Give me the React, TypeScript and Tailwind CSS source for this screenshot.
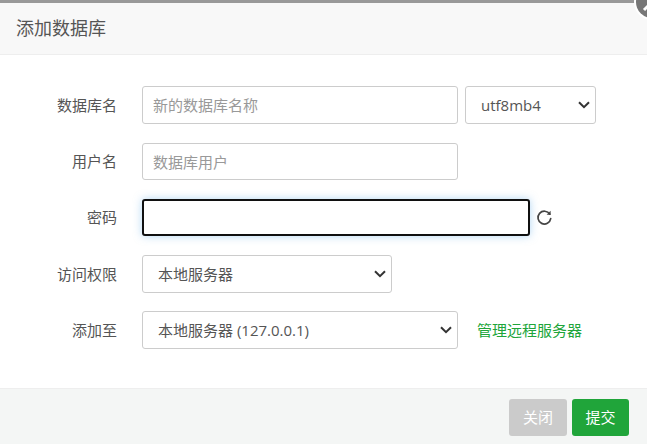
import React from "react";

function Row({ label, children, className }: { label: string; children: React.ReactNode; className: string }) {
  return (
    <div className={`flex items-center ${className}`}>
      <label className="w-[117px] shrink-0 text-right text-[15px] text-[#555]">{label}</label>
      <div className="ml-[25px] flex items-center">{children}</div>
    </div>
  );
}

function Select({ className, options }: { className: string; options: string[] }) {
  return (
    <div className={`relative h-[38px] ${className}`}>
      <select
        className="h-full w-full appearance-none rounded-[3px] border border-[#ccc] bg-white pl-[15px] pr-[24px] text-[15px] text-[#555] outline-none"
        defaultValue={options[0]}
      >
        {options.map((o) => (
          <option key={o}>{o}</option>
        ))}
      </select>
      <svg
        className="pointer-events-none absolute right-[6px] top-[15px]"
        width="12"
        height="8"
        viewBox="0 0 12 8"
        fill="none"
        stroke="#333"
        strokeWidth="2"
      >
        <path d="M1 1.2 6 6.2 11 1.2" />
      </svg>
    </div>
  );
}

const inputCls =
  "w-[316px] rounded-[3px] border border-[#ccc] bg-white px-[10px] text-[15px] text-[#555] placeholder:text-[#999] outline-none";

export default function App() {
  return (
    <div className="relative flex h-[444px] w-[647px] flex-col overflow-hidden bg-white font-['Open_Sans','Noto_Sans_CJK_SC',sans-serif]">
      <div className="h-[3px] shrink-0 bg-[#999]" />
      <div className="flex h-[52px] shrink-0 items-center border-b border-[#eee] bg-[#f8f8f8] pl-[16px] text-[18px] text-[#555]">
        添加数据库
      </div>
      <div className="flex-1 pt-[31px]">
        <Row label="数据库名" className="">
          <input className={`${inputCls} h-[38px]`} placeholder="新的数据库名称" readOnly />
          <Select className="ml-[7px] w-[131px]" options={["utf8mb4", "utf8", "gbk"]} />
        </Row>
        <Row label="用户名" className="mt-[19px]">
          <input className={`${inputCls} h-[37px]`} placeholder="数据库用户" readOnly />
        </Row>
        <Row label="密码" className="mt-[19px]">
          <input
            className="h-[37px] w-[388px] rounded-[3px] border-2 border-[#101010] bg-white px-[10px] text-[15px] shadow-[0_0_8px_rgba(102,175,233,0.5)] outline-none"
            readOnly
          />
          <svg className="ml-[6px]" width="17" height="17" viewBox="0 0 17 17" fill="none" stroke="#444" strokeWidth="1.7" strokeLinecap="round">
            <path d="M13.8 5.2A6.4 6.4 0 1 0 14.7 9.6" />
            <path d="M14.6 1.8V5.8H10.6" fill="#444" stroke="none" />
          </svg>
        </Row>
        <Row label="访问权限" className="mt-[19px]">
          <Select className="w-[250px]" options={["本地服务器", "所有人", "指定IP"]} />
        </Row>
        <Row label="添加至" className="mt-[18px]">
          <Select className="w-[316px]" options={["本地服务器 (127.0.0.1)"]} />
          <a className="ml-[19px] text-[15px] text-[#20a53a]">管理远程服务器</a>
        </Row>
      </div>
      <div className="flex h-[56px] shrink-0 items-start justify-end gap-[5px] border-t border-[#eee] bg-[#f4f6f5] pr-[18px] pt-[10px]">
        <button className="h-[37px] w-[58px] rounded-[3px] bg-[#cbcbcb] text-[15px] text-white">关闭</button>
        <button className="h-[37px] w-[57px] rounded-[3px] bg-[#20a53a] text-[15px] text-white">提交</button>
      </div>
      <div className="absolute left-[636px] top-[-14px] h-[32px] w-[32px] rounded-full bg-[#777] ring-2 ring-white">
        <svg width="32" height="32" viewBox="0 0 32 32" stroke="#fff" strokeWidth="3" fill="none">
          <path d="M8 24 24 8M8 8 24 24" />
        </svg>
      </div>
    </div>
  );
}
